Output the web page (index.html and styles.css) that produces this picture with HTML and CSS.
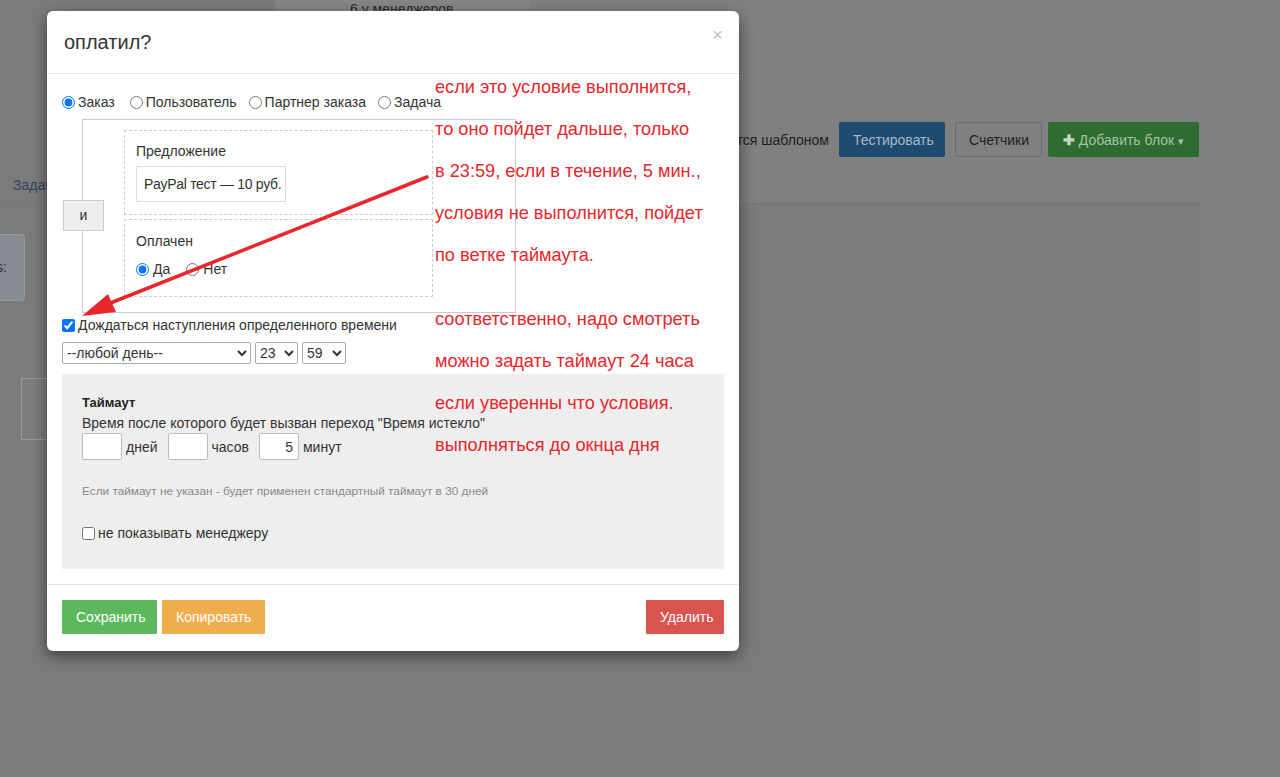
FILE: index.html
```html
<!DOCTYPE html>
<html lang="ru">
<head>
    <meta charset="UTF-8">
    <title>оплатил?</title>
    <link rel="stylesheet" href="styles.css">
</head>
<body>
    <div class="page">
        <div class="topline">
            <div class="topline-left"></div>
            <div class="topline-tab">6 у менеджеров</div>
        </div>
        <div class="head">
            <div class="head-left">
                <span class="tab-link">Задачи</span>
            </div>
            <div class="toolbar">
                <span class="tpl-label">Является шаблоном</span>
                <button class="bg-btn bg-btn-blue">Тестировать</button>
                <button class="bg-btn bg-btn-default">Счетчики</button>
                <button class="bg-btn bg-btn-green"><b>✚</b> Добавить блок <span class="caret">▾</span></button>
            </div>
        </div>
        <div class="panel">
            <div class="panel-card">Steps:</div>
            <div class="panel-box"></div>
        </div>
    </div>

    <div class="modal">
        <div class="modal-header">
            <h4 class="modal-title">оплатил?</h4>
            <span class="close">×</span>
        </div>
        <div class="modal-body">
            <div class="radio-row">
                <label><input type="radio" name="target" checked>Заказ</label>
                <label><input type="radio" name="target">Пользователь</label>
                <label><input type="radio" name="target">Партнер заказа</label>
                <label><input type="radio" name="target">Задача</label>
            </div>

            <div class="cond">
                <div class="cond-and">и</div>
                <div class="cond-list">
                    <div class="cond-item cond-item-offer">
                        <div class="cond-label">Предложение</div>
                        <div class="cond-value">PayPal тест — 10 руб.</div>
                    </div>
                    <div class="cond-item cond-item-paid">
                        <div class="cond-label">Оплачен</div>
                        <div class="cond-radios">
                            <label><input type="radio" name="paid" checked>Да</label>
                            <label><input type="radio" name="paid">Нет</label>
                        </div>
                    </div>
                </div>
            </div>

            <label class="check-row"><input type="checkbox" checked>Дождаться наступления определенного времени</label>
            <div class="time-row">
                <select class="sel-day"><option>--любой день--</option></select>
                <select class="sel-hour"><option>23</option></select>
                <select class="sel-min"><option>59</option></select>
            </div>

            <div class="timeout">
                <div class="timeout-title">Таймаут</div>
                <div class="timeout-desc">Время после которого будет вызван переход "Время истекло"</div>
                <div class="timeout-fields">
                    <input type="text" class="num"><span>дней</span>
                    <input type="text" class="num"><span>часов</span>
                    <input type="text" class="num" value="5"><span>минут</span>
                </div>
                <div class="timeout-hint">Если таймаут не указан - будет применен стандартный таймаут в 30 дней</div>
                <label class="check-row hide-row"><input type="checkbox">не показывать менеджеру</label>
            </div>
        </div>
        <div class="modal-footer">
            <div class="footer-left">
                <button class="btn btn-success">Сохранить</button>
                <button class="btn btn-warning">Копировать</button>
            </div>
            <button class="btn btn-danger">Удалить</button>
        </div>
    </div>

    <div class="notes">
        <p>если это условие выполнится,<br>то оно пойдет дальше, только<br>в 23:59, если в течение, 5 мин.,<br>условия не выполнится, пойдет<br>по ветке таймаута.</p>
        <p>соответственно, надо смотреть<br>можно задать таймаут 24 часа<br>если уверенны что условия.<br>выполняться до окнца дня</p>
    </div>

    <svg class="arrow" width="1280" height="777" viewBox="0 0 1280 777">
        <line x1="427" y1="177" x2="108" y2="304" stroke="#e8262b" stroke-width="3.5" stroke-linecap="round"/>
        <polygon points="82,316 116,312 108,294" fill="#e8262b"/>
    </svg>
</body>
</html>
```

FILE: styles.css
```css
* {
    box-sizing: border-box;
}
body {
    margin: 0;
    width: 1280px;
    height: 777px;
    overflow: hidden;
    position: relative;
    background-color: #808080;
    font-family: "Liberation Sans", Arial, sans-serif;
    font-size: 14px;
    color: #333;
}

/* страница под затемнением */
.topline {
    display: flex;
    height: 14px;
}
.topline-left {
    width: 275px;
    background-color: #7b7b7b;
}
.topline-tab {
    width: 255px;
    background-color: #868686;
    color: #2a2a2a;
    padding-left: 75px;
    line-height: 18px;
    overflow: hidden;
}
.head {
    display: flex;
    height: 189px;
}
.head-left {
    width: 275px;
    background-color: #7b7b7b;
    padding: 163px 0 0 13px;
}
.tab-link {
    color: #34465a;
}
.toolbar {
    flex: 1;
    display: flex;
    justify-content: flex-end;
    align-items: center;
    gap: 10px;
    padding: 108px 81px 0 0;
    align-self: flex-start;
}
.tpl-label {
    color: #1e1e1e;
}
.bg-btn {
    height: 35px;
    border: 1px solid transparent;
    border-radius: 2px;
    font-family: inherit;
    font-size: 14px;
    padding: 0 13px;
}
.bg-btn-blue {
    background-color: #1f4a72;
    color: #a9b8c8;
    width: 106px;
}
.bg-btn-default {
    background-color: #808080;
    border-color: #6c6c6c;
    color: #1e1e1e;
    width: 87px;
}
.bg-btn-green {
    background-color: #2f6c30;
    color: #a4c2a4;
    width: 151px;
    margin-left: -4px;
}
.bg-btn-green b {
    color: #c4d6c4;
}
.caret {
    font-size: 11px;
}
.panel {
    width: 1200px;
    height: 574px;
    background-color: #7b7b7b;
    border-top: 1px solid #767676;
    padding-top: 30px;
}
.panel-card {
    width: 70px;
    height: 67px;
    margin-left: -45px;
    background-color: #878c93;
    border: 1px solid #959aa0;
    border-radius: 4px;
    text-align: right;
    padding: 24px 17px 0 0;
    color: #2e3338;
}
.panel-box {
    width: 80px;
    height: 62px;
    margin: 77px 0 0 21px;
    border: 1px solid #999;
    background-color: #7d7d7d;
}

/* окно */
.modal {
    position: absolute;
    top: 11px;
    left: 47px;
    width: 692px;
    background-color: #fff;
    border-radius: 6px;
    box-shadow: 0 5px 15px rgba(0, 0, 0, 0.5);
}
.modal-header {
    height: 63px;
    padding: 0 16px 0 17px;
    border-bottom: 1px solid #e5e5e5;
    display: flex;
    justify-content: space-between;
    align-items: center;
}
.modal-title {
    margin: 0;
    font-size: 20px;
    font-weight: normal;
    line-height: 28px;
}
.close {
    color: #c4c4c4;
    font-size: 19px;
    margin-top: -14px;
}
.modal-body {
    padding: 18px 15px 15px;
}
.radio-row {
    display: flex;
    line-height: 20px;
}
.radio-row label {
    display: flex;
    align-items: center;
    margin-right: 12px;
}
input[type="radio"],
input[type="checkbox"] {
    width: 13px;
    height: 13px;
    margin: 0 3px 0 0;
}
.radio-row label:first-child {
    margin-right: 15px;
}

.cond {
    margin: 7px 0 0 20px;
    width: 434px;
    height: 194px;
    border: 1px solid #ccc;
    padding: 10px 0 15px;
    display: flex;
    align-items: center;
}
.cond-and {
    width: 41px;
    height: 31px;
    margin: 3px 20px 0 -20px;
    background-color: #eee;
    border: 1px solid #ccc;
    text-align: center;
    line-height: 29px;
}
.cond-list {
    display: flex;
    flex-direction: column;
    gap: 4px;
}
.cond-item {
    width: 309px;
    border: 1px dashed #ccc;
    padding: 10px 11px;
}
.cond-item-offer {
    height: 85px;
}
.cond-item-paid {
    height: 78px;
    padding-top: 11px;
}
.cond-label {
    line-height: 20px;
    margin-bottom: 5px;
}
.cond-item-paid .cond-label {
    margin-bottom: 8px;
}
.cond-value {
    display: inline-block;
    width: 150px;
    height: 36px;
    line-height: 34px;
    padding: 0 7px;
    border: 1px solid #ddd;
    white-space: nowrap;
    letter-spacing: -0.3px;
}
.cond-radios {
    display: flex;
    line-height: 20px;
}
.cond-radios label {
    display: flex;
    align-items: center;
    margin-right: 16px;
}
.cond-radios input {
    margin-right: 4px;
}

.check-row {
    display: flex;
    align-items: center;
    line-height: 20px;
    margin-top: 2px;
}
.time-row {
    display: flex;
    gap: 4px;
    margin-top: 7px;
}
select {
    height: 22px;
    font-family: inherit;
    font-size: 14px;
    color: #333;
    border: 1px solid #aaa;
    border-radius: 2px;
    background-color: #fff;
}
.sel-day {
    width: 189px;
}
.sel-hour {
    width: 43px;
}
.sel-min {
    width: 44px;
}

.timeout {
    margin-top: 10px;
    height: 195px;
    background-color: #eee;
    padding: 21px 20px 0;
}
.timeout-title {
    font-weight: bold;
    font-size: 13px;
    line-height: 16px;
    color: #222;
}
.timeout-desc {
    line-height: 16px;
    margin-top: 4px;
}
.timeout-fields {
    display: flex;
    align-items: center;
    margin-top: 2px;
}
.num {
    width: 40px;
    height: 27px;
    border: 1px solid #bbb;
    border-radius: 2px;
    font-family: inherit;
    font-size: 14px;
    color: #333;
    text-align: right;
    padding: 0 5px;
}
.timeout-fields span {
    margin: 0 10px 0 4px;
}
.timeout-hint {
    margin-top: 24px;
    font-size: 11.8px;
    color: #888;
    line-height: 14px;
}
.hide-row {
    margin-top: 25px;
}

.modal-footer {
    border-top: 1px solid #e5e5e5;
    padding: 15px 15px 17px;
    display: flex;
    justify-content: space-between;
}
.footer-left {
    display: flex;
    gap: 5px;
}
.btn {
    height: 34px;
    padding: 0 14px;
    border: none;
    border-radius: 1px;
    color: #fff;
    font-family: inherit;
    font-size: 14px;
}
.btn-success {
    background-color: #5cb85c;
    width: 95px;
}
.btn-warning {
    background-color: #f0ad4e;
    width: 103px;
}
.btn-danger {
    background-color: #d9534f;
    width: 78px;
}

/* пометки поверх скриншота */
.notes {
    position: absolute;
    top: 66px;
    left: 435px;
    color: #e8262b;
    font-size: 18.2px;
    line-height: 42px;
}
.notes p {
    margin: 0 0 22px;
}
.arrow {
    position: absolute;
    top: 0;
    left: 0;
    pointer-events: none;
}
```
